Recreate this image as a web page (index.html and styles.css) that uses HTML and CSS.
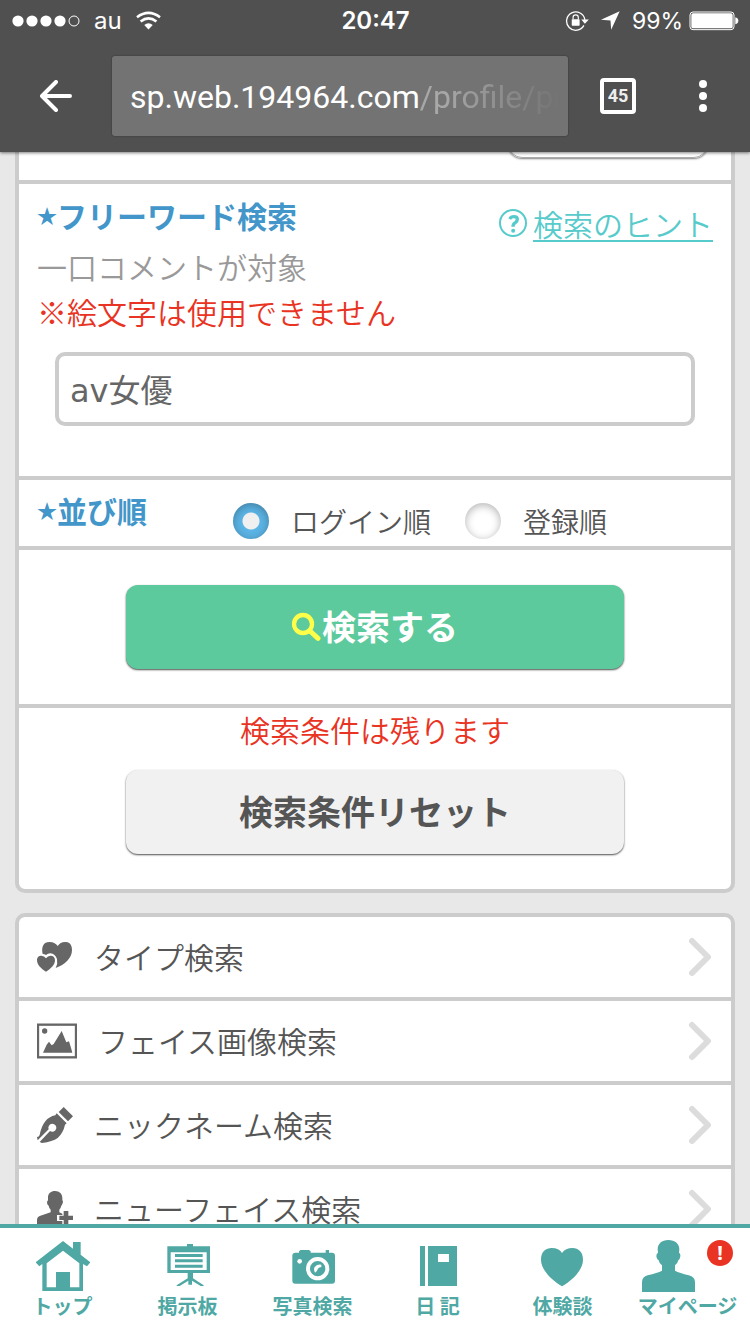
FILE: index.html
```html
<!DOCTYPE html>
<html lang="ja">
<head>
<meta charset="utf-8">
<meta name="viewport" content="width=device-width, initial-scale=1">
<title>検索</title>
<link rel="stylesheet" href="styles.css">
</head>
<body>
<header class="chrome">
  <div class="status">
    <div class="status-side">
      <svg class="signal" viewBox="0 0 68 12" width="68" height="12"><g fill="#fff"><circle cx="6" cy="6" r="5.6"/><circle cx="20" cy="6" r="5.6"/><circle cx="34" cy="6" r="5.6"/><circle cx="48" cy="6" r="5.6"/></g><circle cx="62" cy="6" r="5" fill="none" stroke="#fff"/></svg>
      <span class="carrier">au</span>
      <svg viewBox="402 32 76 56" width="25" height="19"><g fill="none" stroke="#fff" stroke-width="8"><path d="M405 50Q440 24 475 50"/><path d="M416 63Q440 44 464 63"/></g><path d="M427 74Q440 62 453 74L440 87Z" fill="#fff"/></svg>
    </div>
    <time class="clock">20:47</time>
    <div class="status-side status-right">
      <svg viewBox="580 28 72 64" width="24" height="21"><path d="M637 75A28 28 0 1 1 640 58" fill="none" stroke="#fff" stroke-width="4"/><path d="M629 57H652L640 70Z" fill="#fff"/><rect x="600" y="56" width="24" height="20" rx="2" fill="#fff"/><path d="M604 57V51a8 8 0 0 1 16 0V57" fill="none" stroke="#fff" stroke-width="3.500"/></svg>
      <svg viewBox="688 34 56 56" width="19" height="19"><path d="M743 35L718 89L716 62L688 60Z" fill="#fff"/></svg>
      <span class="percent">99%</span>
      <svg viewBox="944 32 150 60" width="50" height="20"><rect x="947" y="35" width="132" height="53" rx="9" fill="none" stroke="#fff" stroke-width="3"/><rect x="951" y="39" width="124" height="45" rx="5" fill="#fff"/><path d="M1083 51Q1092 53 1092 61.500T1083 72Z" fill="#fff"/></svg>
    </div>
  </div>
  <div class="toolbar">
    <button class="tool back" type="button" aria-label="戻る"><svg viewBox="0 0 32 32" width="32" height="32"><path d="M30 16H3M16 2L2 16L16 30" fill="none" stroke="#fff" stroke-width="4" stroke-linecap="round" stroke-linejoin="round"/></svg></button>
    <button class="address" type="button"><span class="host">sp.web.194964.com</span><span class="path">/profile/pr</span></button>
    <button class="tool tabs" type="button"><span class="tab-count">45</span></button>
    <button class="tool menu" type="button" aria-label="メニュー"><svg viewBox="0 0 8 32" width="8" height="32" fill="#fff"><circle cx="4" cy="4" r="4"/><circle cx="4" cy="16" r="4"/><circle cx="4" cy="28" r="4"/></svg></button>
  </div>
</header>

<main class="page">
  <form class="card card-search">
    <section class="band band-top"><div class="pill"></div></section>
    <section class="band band-word">
      <div class="head">
        <h2 class="title"><label for="word"><span class="star">★</span>フリーワード検索</label></h2>
        <div class="hint">
          <svg viewBox="372 90 84 84" width="28" height="28"><circle cx="414" cy="132" r="39" fill="none" stroke="#57cbcb" stroke-width="6"/><path d="M404 120Q408 113 417 113Q427 113 427 121Q427 127 421 131Q414 135 414 143" fill="none" stroke="#57cbcb" stroke-width="10"/><circle cx="414.500" cy="155" r="6" fill="#57cbcb"/></svg>
          <a class="hint-link" href="#">検索のヒント</a>
        </div>
      </div>
      <p class="note">一口コメントが対象</p>
      <p class="note warn">※絵文字は使用できません</p>
      <input class="field" id="word" type="text" value="av女優">
    </section>
    <section class="band band-sort">
      <h2 class="title sort-title"><span class="star">★</span>並び順</h2>
      <div class="options">
        <label class="option"><input class="radio" type="radio" name="sort" checked>ログイン順</label>
        <label class="option"><input class="radio" type="radio" name="sort">登録順</label>
      </div>
    </section>
    <section class="band band-action">
      <button class="btn btn-search" type="button"><svg viewBox="878 426 90 90" width="30" height="30"><circle cx="911" cy="465" r="27" fill="none" stroke="#ffff4a" stroke-width="13"/><path d="M932 486L956 508" stroke="#ffff4a" stroke-width="15" stroke-linecap="round"/></svg>検索する</button>
    </section>
    <section class="band band-reset">
      <p class="note warn">検索条件は残ります</p>
      <button class="btn btn-reset" type="button">検索条件リセット</button>
    </section>
  </form>

  <nav class="card">
    <a class="row" href="#">
      <svg viewBox="111 177 108 108" width="36" height="36" fill="#666"><path d="M128 222C123 200 131 186 148 186C161 186 169 192 173 198C178 190 187 185 198 186C211 187 216 197 216 210C216 234 195 254 167 264Q174 251 171 237Q166 222 151 220Q143 220 138 225Q134 222 128 222Z"/><path d="M138 275C123 266 111 254 111 241C111 231 117 227 124 227Q133 227 138 235Q143 227 152 227C160 227 165 232 165 241C165 254 153 266 138 275Z"/></svg>
      <span class="row-text">タイプ検索</span>
      <svg class="chevron" viewBox="0 0 24 40" width="24" height="40"><path d="M4 4L20 20L4 36" /></svg>
    </a>
    <a class="row" href="#">
      <svg viewBox="111 422 120 120" width="40" height="40"><rect x="114" y="433" width="114" height="98" fill="#fff" stroke="#666" stroke-width="7"/><circle cx="134" cy="452" r="8" fill="#666"/><path d="M129 517L140 493L147 484L155 495L161 491L185 452L199 486L207 483L214 506L217 517Z" fill="#666"/></svg>
      <span class="row-text">フェイス画像検索</span>
      <svg class="chevron" viewBox="0 0 24 40" width="24" height="40"><path d="M4 4L20 20L4 36" /></svg>
    </a>
    <a class="row" href="#">
      <svg viewBox="111 141 108 108" width="36" height="36" fill="#666"><path d="M191 141L219 169L204 184L176 156Z"/><path d="M170 160L200 190L195 194Q190 218 173 234Q158 245 126 249L119 246L150 213A12 12 0 1 0 146 208L113 241L111 231Q117 231 119 225Q124 199 136 184Q147 170 166 166Z"/></svg>
      <span class="row-text">ニックネーム検索</span>
      <svg class="chevron" viewBox="0 0 24 40" width="24" height="40"><path d="M4 4L20 20L4 36" /></svg>
    </a>
    <a class="row" href="#">
      <svg viewBox="111 393 108 108" width="36" height="36" fill="#666"><path d="M165 393C179 393 187 402 187 414V421Q190 422 188 430Q186 435 184 437Q182 445 178 449V457L187 461V465H171V483H187V501H111V481Q111 471 119 468L152 457V449Q147 444 146 437Q142 435 141 428Q141 423 144 421V412C144 400 153 393 165 393Z"/><path d="M191 453H205V467H219V480H205V494H191V480H178V467H191Z"/></svg>
      <span class="row-text">ニューフェイス検索</span>
      <svg class="chevron" viewBox="0 0 24 40" width="24" height="40"><path d="M4 4L20 20L4 36" /></svg>
    </a>
  </nav>
</main>

<nav class="tabbar">
  <a class="tab" href="#">
    <span class="tab-icon"><svg viewBox="108 60 162 156" width="54" height="52" fill="#4fa8a4"><path d="M189 63L219 86V66H242V104L271 127L261 139L249 132V213H127V132L118 139L107 127ZM189 92L140 130V202H168V156H210V202H238V130Z" fill-rule="evenodd"/></svg></span>
    <span class="tab-text">トップ</span>
  </a>
  <a class="tab" href="#">
    <span class="tab-icon"><svg viewBox="483 60 162 156" width="54" height="52" fill="#4fa8a4"><path d="M502 79H561V72H579V79H630V159H579V175L611 196V198H602L576 182V194H565V182L539 198H530V196L563 175V159H502ZM512 97V150H620V97Z" fill-rule="evenodd"/><path d="M525 102H608V111H525ZM525 118H608V127H525ZM525 134H608V143H525Z"/></svg></span>
    <span class="tab-text">掲示板</span>
  </a>
  <a class="tab" href="#">
    <span class="tab-icon"><svg viewBox="108 60 162 156" width="54" height="52" fill="#4fa8a4"><path d="M136 98H147V94L152 90H177L182 94V98H227V90H237V98H246Q255 98 255 107V182Q255 191 246 191H136Q127 191 127 182V107Q127 98 136 98Z"/><circle cx="149" cy="124" r="7" fill="#fff"/><circle cx="203" cy="146" r="29" fill="none" stroke="#fff" stroke-width="12"/><path d="M214 134Q202 132 194 141Q190 148 195 158Q201 155 202 149Q205 141 214 141Z" fill="#fff"/></svg></span>
    <span class="tab-text">写真検索</span>
  </a>
  <a class="tab" href="#">
    <span class="tab-icon"><svg viewBox="483 60 162 156" width="54" height="52" fill="#4fa8a4"><path d="M510 78H525V198H510ZM534 78H621V198H534ZM564 102V126H597V102Z" fill-rule="evenodd"/></svg></span>
    <span class="tab-text">日 記</span>
  </a>
  <a class="tab" href="#">
    <span class="tab-icon"><svg viewBox="108 180 162 156" width="54" height="52" fill="#4fa8a4"><path d="M186 319C155 300 123 270 123 239C123 214 138 204 155 204Q177 204 186 219Q196 204 218 204C235 204 249 216 249 239C249 270 218 300 186 319Z"/></svg></span>
    <span class="tab-text">体験談</span>
  </a>
  <a class="tab" href="#">
    <span class="tab-icon"><svg viewBox="435 180 159 156" width="53" height="52" fill="#4fa8a4"><path d="M514 180C534 180 547 191 547 208L546 218Q551 220 550 229Q549 238 544 241Q542 250 534 256V272Q548 279 575 286Q594 291 594 307V336H435V307Q435 291 452 286Q481 279 495 272V256Q486 250 485 241Q479 238 478 229Q478 220 483 218L482 208C482 191 494 180 514 180Z"/></svg><span class="badge">!</span></span>
    <span class="tab-text">マイページ</span>
  </a>
</nav>
</body>
</html>
```
FILE: styles.css
```css
* {
  box-sizing: border-box;
}

body {
  margin: 0;
  height: 100vh;
  display: flex;
  flex-direction: column;
  overflow: hidden;
  background: #e8e8e8;
  color: #555;
  font-family: "Noto Sans CJK JP", sans-serif;
  font-size: 30px;
  font-weight: 350;
  line-height: 45px;
}

button,
input {
  font: inherit;
  color: inherit;
}

h2,
p {
  margin: 0;
}

svg {
  display: block;
  flex: none;
}

a {
  color: inherit;
  text-decoration: none;
}

/* Status bar and browser toolbar */

.chrome {
  position: relative;
  flex: none;
  background: #505050;
  color: #fff;
  box-shadow: 0 1px 3px rgba(0, 0, 0, 0.5);
}

.status {
  display: flex;
  align-items: center;
  height: 40px;
  padding: 1px 11px 0 12px;
  font-family: Inter, sans-serif;
  font-size: 24px;
  font-weight: 400;
  line-height: 40px;
}

.status-side {
  flex: 1;
  display: flex;
  align-items: center;
  gap: 14px;
}

.status-right {
  justify-content: flex-end;
  gap: 12px;
}

.percent {
  margin-right: -6px;
  font-size: 23px;
}

.clock {
  font-weight: 600;
}

.toolbar {
  display: flex;
  align-items: center;
  height: 112px;
  font-family: Roboto, sans-serif;
}

.tool {
  flex: none;
  display: flex;
  align-items: center;
  justify-content: center;
  height: 80px;
  padding: 0;
  border: 0;
  background: none;
}

.back {
  width: 112px;
}

.tabs {
  width: 100px;
}

.menu {
  width: 70px;
  margin-right: 12px;
}

.tab-count {
  width: 36px;
  height: 36px;
  border: 4px solid #fff;
  border-radius: 4px;
  color: #eee;
  font-size: 18px;
  font-weight: 700;
  line-height: 28px;
}

.address {
  flex: 1;
  min-width: 0;
  display: flex;
  align-items: center;
  height: 80px;
  padding: 2px 0 0 18px;
  border: 0;
  border-radius: 3px;
  background: #737373;
  color: #fff;
  font-size: 32px;
  font-weight: 400;
  box-shadow: 0 0 2px rgba(0, 0, 0, 0.4);
}

.path {
  flex: 1;
  min-width: 0;
  overflow: hidden;
  color: #a8a8a8;
  text-align: left;
  white-space: nowrap;
  mask-image: linear-gradient(to right, #000 15%, transparent 95%);
}

/* Page body */

.page {
  flex: 1;
  min-height: 0;
  overflow: hidden;
  padding: 0 15px;
}

.card {
  border: 4px solid #ccc;
  border-radius: 10px;
  background: #fff;
  margin-bottom: 20px;
}

.card-search {
  margin-top: -40px;
}

.band + .band,
.row + .row {
  border-top: 4px solid #ccc;
}

.band-top {
  display: flex;
  justify-content: flex-end;
  padding: 0 23px 22px;
}

.pill {
  width: 200px;
  height: 42px;
  border: 1px solid #aaa;
  border-radius: 14px;
  box-shadow: 0 1px 2px rgba(0, 0, 0, 0.5);
}

.band-word {
  padding: 9px 18px 50px;
}

.head {
  display: flex;
  justify-content: space-between;
  height: 51px;
}

.title {
  color: #4296ca;
  font-size: 30px;
  font-weight: 700;
  line-height: 45px;
}

.star {
  font-size: 20px;
  vertical-align: 4px;
  line-height: 20px;
}

.hint {
  align-self: flex-end;
  display: flex;
  align-items: center;
  gap: 6px;
  color: #57cbcb;
  line-height: 42px;
}

.hint-link {
  text-decoration: underline;
  text-decoration-thickness: 2px;
  text-underline-offset: 4px;
  text-decoration-skip-ink: none;
}

.note {
  color: #999;
}

.warn {
  color: #e93323;
}

.field {
  display: block;
  width: calc(100% - 36px);
  height: 74px;
  margin: 18px 18px 0;
  padding: 0 11px 2px;
  border: 4px solid #ccc;
  border-radius: 10px;
  background: #fff;
  color: #666;
  font-family: "DejaVu Sans", "Noto Sans CJK JP", sans-serif;
  font-size: 32px;
  font-weight: 400;
}

.band-sort {
  display: flex;
  padding: 8px 18px 7px;
}

.sort-title {
  flex: none;
  width: 196px;
  height: 51px;
}

.options {
  display: flex;
  align-items: flex-end;
  gap: 34px;
}

.option {
  display: flex;
  align-items: center;
  gap: 22px;
  font-size: 28px;
  line-height: 36px;
}

.radio {
  appearance: none;
  width: 36px;
  height: 36px;
  margin: 0;
  border-radius: 50%;
  background: #fff;
  box-shadow: inset 0 2px 8px rgba(0, 0, 0, 0.3);
}

.radio:checked {
  background: radial-gradient(circle, #f0f0f0 8px, #5bb4e5 9px);
}

.band-action {
  padding: 35px 0;
}

.btn {
  display: flex;
  align-items: center;
  justify-content: center;
  width: 70%;
  height: 84px;
  margin: 0 auto;
  padding: 0 0 3px;
  border: 0;
  border-radius: 12px;
  font-size: 34px;
  font-weight: 700;
  box-shadow: 0 1px 2px rgba(0, 0, 0, 0.7);
}

.btn-search {
  background: #5cca9d;
  color: #fff;
}

.btn-reset {
  margin-top: 20px;
  background: #f1f1f1;
}

.band-reset {
  padding-bottom: 35px;
  line-height: 42px;
  text-align: center;
}

.row {
  display: flex;
  align-items: center;
  gap: 21px;
  padding: 0 19px 0 18px;
}

.row-text {
  flex: 1;
  padding-bottom: 2px;
  line-height: 78px;
}

.chevron {
  fill: none;
  stroke: #dcdcdc;
  stroke-width: 6px;
  stroke-linecap: round;
  stroke-linejoin: round;
}

/* Bottom navigation */

.tabbar {
  flex: none;
  display: grid;
  grid-template-columns: repeat(6, 1fr);
  padding: 12px 0 14px;
  border-top: 4px solid #4fa8a4;
  background: #fff;
  color: #4fa8a4;
}

.tab {
  display: flex;
  flex-direction: column;
  align-items: center;
}

.tab-icon {
  display: flex;
  gap: 12px;
}

.tab-text {
  font-size: 20px;
  font-weight: 700;
  line-height: 28px;
  white-space: nowrap;
}

.badge {
  width: 26px;
  height: 26px;
  border-radius: 50%;
  background: #e93323;
  color: #fff;
  font-family: "Noto Sans", sans-serif;
  font-size: 20px;
  font-weight: 700;
  line-height: 26px;
  text-align: center;
}
```
